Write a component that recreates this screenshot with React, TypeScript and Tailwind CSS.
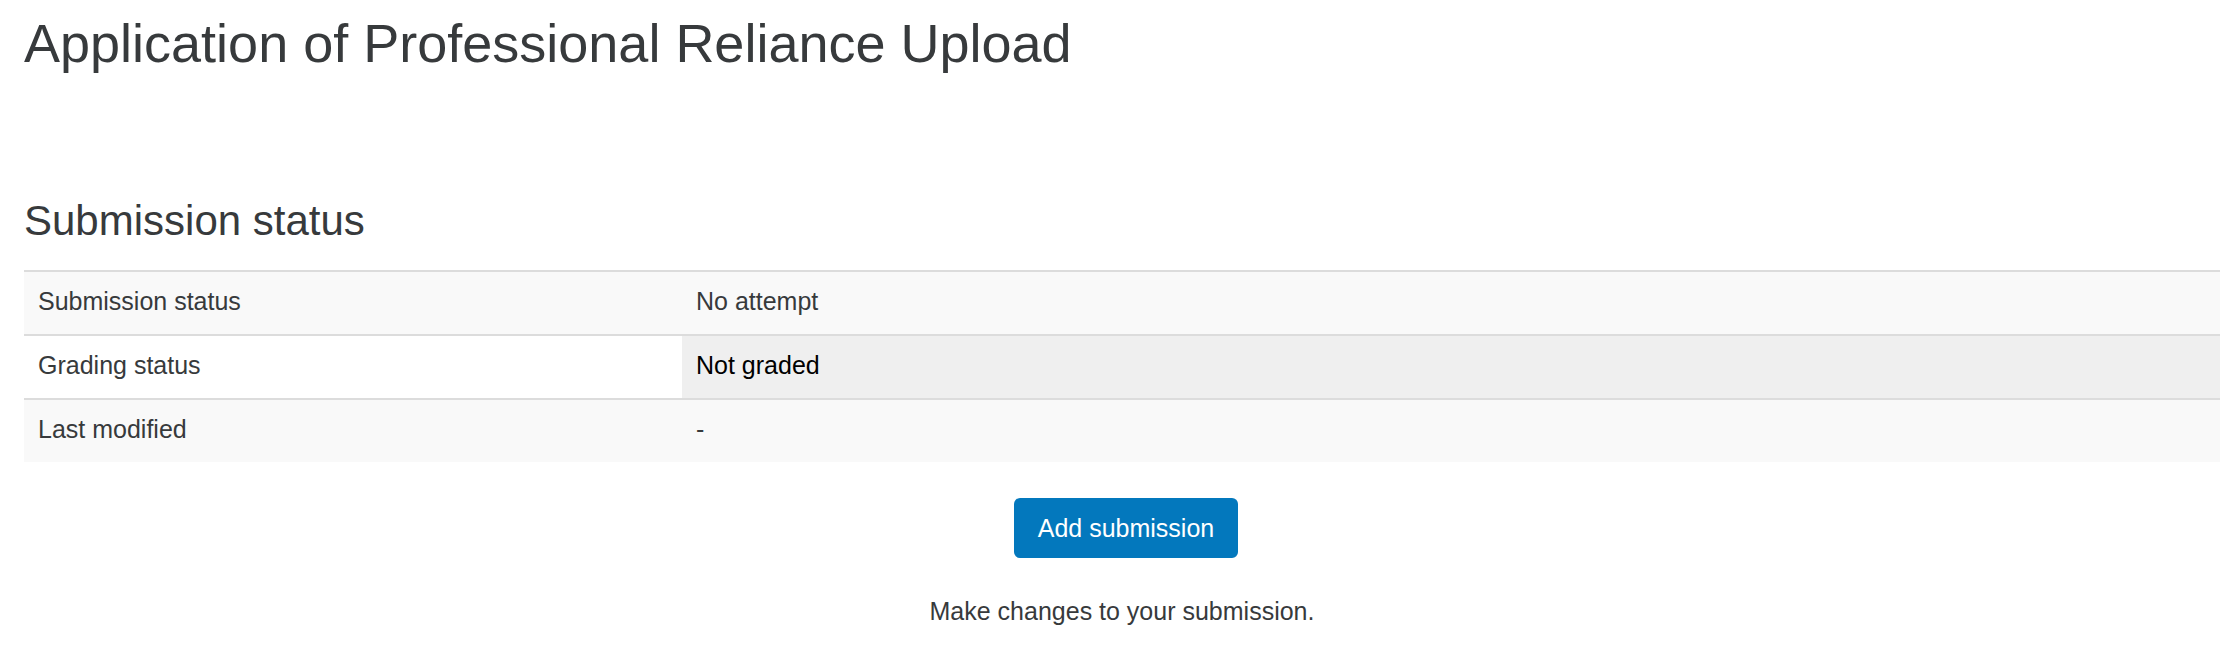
import React from "react";

const rows = [
  { label: "Submission status", value: "No attempt", rowBg: "bg-[#f9f9f9]", valueBg: "bg-[#f9f9f9]", valueColor: "text-[#373a3c]" },
  { label: "Grading status", value: "Not graded", rowBg: "bg-white", valueBg: "bg-[#efefef]", valueColor: "text-black" },
  { label: "Last modified", value: "-", rowBg: "bg-[#f9f9f9]", valueBg: "bg-[#f9f9f9]", valueColor: "text-[#373a3c]" },
];

export default function App() {
  return (
    <div
      className="min-h-[656px] w-full bg-white text-[#373a3c]"
      style={{ fontFamily: '"Liberation Sans", Arial, Helvetica, sans-serif' }}
    >
      <div className="pl-[24px] pr-[18px] pt-[11px]">
        <h1 className="text-[54px] leading-[1.2] font-normal">Application of Professional Reliance Upload</h1>
        <h2 className="mt-[120px] text-[42px] leading-[1.2] font-normal">Submission status</h2>
        <div className="mt-[24px] grid grid-cols-[658px_1fr] text-[25px]">
          {rows.map((r) => (
            <React.Fragment key={r.label}>
              <div className={`h-[64px] border-t-2 border-[#dcdcdc] pl-[14px] pt-[11px] leading-[37px] ${r.rowBg}`}>
                {r.label}
              </div>
              <div className={`h-[64px] border-t-2 border-[#dcdcdc] pl-[14px] pt-[11px] leading-[37px] ${r.valueBg} ${r.valueColor}`}>
                {r.value}
              </div>
            </React.Fragment>
          ))}
        </div>
        <div className="mt-[36px] flex flex-col items-center">
          <button className="ml-[8px] h-[60px] rounded-[6px] bg-[#0378bd] px-[24px] text-[25px] leading-[37px] text-white">
            Add submission
          </button>
          <p className="mt-[35px] text-[25px] leading-[37px]">Make changes to your submission.</p>
        </div>
      </div>
    </div>
  );
}
